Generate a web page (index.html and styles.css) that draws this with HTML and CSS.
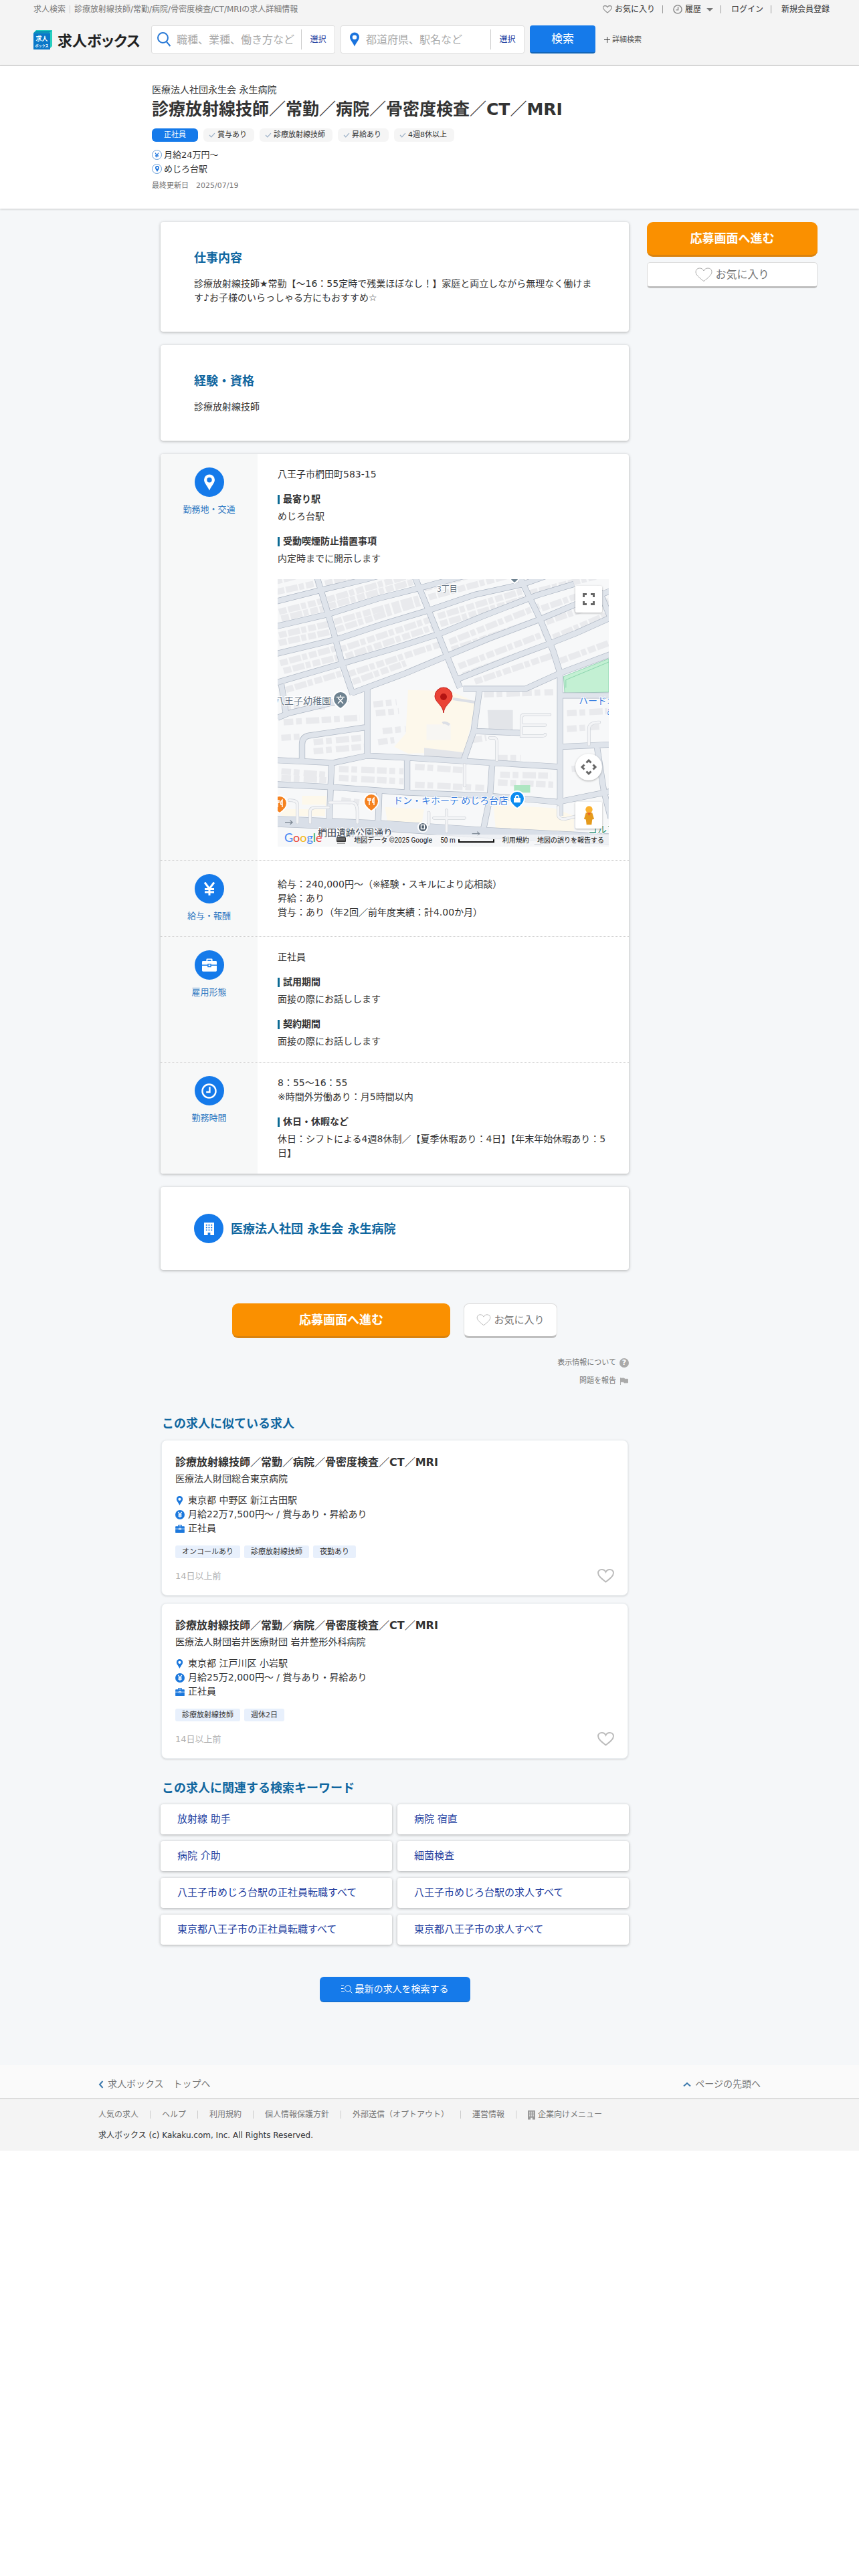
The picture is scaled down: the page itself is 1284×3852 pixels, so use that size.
FILE: index.html
```html
<!DOCTYPE html>
<html lang="ja">
<head>
<meta charset="utf-8">
<meta name="viewport" content="width=device-width, initial-scale=1">
<title>診療放射線技師/常勤/病院/骨密度検査/CT/MRIの求人詳細情報</title>
<link rel="stylesheet" href="styles.css">
</head>
<body>
<svg class="defs" aria-hidden="true">
  <symbol id="heart" viewBox="0 0 26 22"><path d="M13 20.5C6 15 1 11 1 6.5 1 3 3.700 1 6.800 1 9.500 1 11.800 2.500 13 5 14.200 2.500 16.500 1 19.200 1 22.300 1 25 3 25 6.500 25 11 20 15 13 20.500Z" fill="none" stroke="currentColor"/></symbol>
  <symbol id="clock" viewBox="0 0 24 24"><circle cx="12" cy="12" r="10.500" fill="none" stroke="currentColor" stroke-width="2.500"/><path d="M13 5.500v8H7.500" fill="none" stroke="currentColor" stroke-width="2.500"/></symbol>
  <symbol id="pin" viewBox="0 0 16 24"><path fill-rule="evenodd" d="M8 0a8 8 0 0 1 8 8c0 5-5.500 9.500-8 16C5.500 17.500 0 13 0 8a8 8 0 0 1 8-8Zm0 4.500a3.700 3.700 0 1 0 0 7.400 3.700 3.700 0 0 0 0-7.400Z" fill="currentColor"/></symbol>
  <symbol id="yen" viewBox="0 0 20 20"><path d="M3 0.500 10 10 17 0.500M10 9v11M3 10.500h14M3 15h14" fill="none" stroke="currentColor" stroke-width="3"/></symbol>
  <symbol id="bag" viewBox="0 0 24 21"><path fill-rule="evenodd" d="M7 4V1.500Q7 0 8.500 0h7Q17 0 17 1.500V4h5.500Q24 4 24 5.500V10h-9V8.500H9V10H0V5.500Q0 4 1.500 4ZM9 4h6V2H9ZM0 11.500h9V14h6v-2.500h9v8q0 1.500-1.500 1.500h-21Q0 21 0 19.500ZM10.500 10h3v2.500h-3Z" fill="currentColor"/></symbol>
  <symbol id="building" viewBox="0 0 16 20"><path fill-rule="evenodd" d="M0 0h16v20h-6v-4H6v4H0ZM3 3v2h2V3Zm4 0v2h2V3Zm4 0v2h2V3ZM3 7v2h2V7Zm4 0v2h2V7Zm4 0v2h2V7ZM3 11v2h2v-2Zm4 0v2h2v-2Zm4 0v2h2v-2Z" fill="currentColor"/></symbol>
  <symbol id="check" viewBox="0 0 12 10"><path d="M1 5l3.500 3.500L11 1.500" fill="none" stroke="currentColor" stroke-width="1.500"/></symbol>
  <symbol id="yen-disc" viewBox="0 0 14 14"><circle cx="7" cy="7" r="7" fill="currentColor"/><path d="M4.300 3 7 6.600 9.700 3M7 6v5.300M4.300 7.100h5.400M4.300 9.100h5.400" fill="none" stroke="#fff" stroke-width="1.300"/></symbol>
</svg>

<header class="site-header">
  <div class="top-row">
    <nav class="crumbs" aria-label="パンくず"><a href="#">求人検索</a><i class="bar"></i><span>診療放射線技師/常勤/病院/骨密度検査/CT/MRIの求人詳細情報</span></nav>
    <nav class="user-nav" aria-label="ユーザー">
      <a href="#"><svg class="i-nav heart-bold"><use href="#heart"/></svg>お気に入り</a><i class="bar"></i>
      <a href="#"><svg class="i-nav"><use href="#clock"/></svg>履歴<b class="caret"></b></a><i class="bar"></i>
      <a href="#">ログイン</a><i class="bar"></i>
      <a href="#">新規会員登録</a>
    </nav>
  </div>
  <div class="search-row">
    <a class="logo" href="#" aria-label="求人ボックス">
      <svg class="logo-mark" viewBox="0 0 28 29"><path d="M0 4.500 4 0h24v24l-5 5Z" fill="#27cfc0"/><path d="M0 4.500 4 1h23l-4 3.500Z" fill="#0b93b8"/><path d="M0 4.500h25V29H0Z" fill="#0b78c8"/><text x="12.500" y="16" text-anchor="middle" font-size="9">求人</text><text x="12.500" y="25" text-anchor="middle" font-size="5">ボックス</text></svg>
      <span class="logo-text">求人ボックス</span>
    </a>
    <form class="search" action="#">
      <div class="field">
        <svg class="i-search" viewBox="0 0 20 24"><circle cx="8.500" cy="9.500" r="7.500"/><path d="M14 15.500l5.500 6.500"/></svg>
        <input type="text" aria-label="キーワード" placeholder="職種、業種、働き方など">
        <button class="pick" type="button">選択</button>
      </div>
      <div class="field">
        <svg class="i-pin"><use href="#pin"/></svg>
        <input type="text" aria-label="勤務地" placeholder="都道府県、駅名など">
        <button class="pick" type="button">選択</button>
      </div>
      <button class="btn-search" type="submit">検索</button>
      <a class="detail" href="#"><svg class="i-plus" viewBox="0 0 9 9"><path d="M4.500 0v9M0 4.500h9"/></svg>詳細検索</a>
    </form>
  </div>
</header>

<section class="job-head">
  <p class="company">医療法人社団永生会 永生病院</p>
  <h1>診療放射線技師／常勤／病院／骨密度検査／CT／MRI</h1>
  <ul class="tags">
    <li class="main-tag">正社員</li>
    <li><svg class="i-check"><use href="#check"/></svg>賞与あり</li>
    <li><svg class="i-check"><use href="#check"/></svg>診療放射線技師</li>
    <li><svg class="i-check"><use href="#check"/></svg>昇給あり</li>
    <li><svg class="i-check"><use href="#check"/></svg>4週8休以上</li>
  </ul>
  <p class="fact"><span class="ring"><svg class="r-yen"><use href="#yen"/></svg></span>月給24万円～</p>
  <p class="fact"><span class="ring"><svg class="r-pin"><use href="#pin"/></svg></span>めじろ台駅</p>
  <p class="updated">最終更新日　2025/07/19</p>
</section>

<div class="body-wrap">
<main>
  <section class="card text-card"><h2>仕事内容</h2><p>診療放射線技師★常勤【～16：55定時で残業ほぼなし！】家庭と両立しながら無理なく働けます♪お子様のいらっしゃる方にもおすすめ☆</p></section>
  <section class="card text-card"><h2>経験・資格</h2><p>診療放射線技師</p></section>

  <section class="card rows">
    <div class="row">
      <div class="side-label"><span class="disc"><svg class="d-pin"><use href="#pin"/></svg></span>勤務地・交通</div>
      <div class="content">
        <p>八王子市椚田町583-15</p>
        <h3>最寄り駅</h3><p>めじろ台駅</p>
        <h3>受動喫煙防止措置事項</h3><p>内定時までに開示します</p>
        <div class="map">
          <svg class="map-art" viewBox="0 0 495 400" preserveAspectRatio="xMidYMid slice" role="img" aria-label="地図">
            <defs>
              <g id="streets">
                <path d="M30 150 240 95 430 48 600 0M30 262 265 205 480 135 660 88 760 60 900 20M30 385 300 318 500 250 700 188 900 118 1110 70 1300 0M30 515 320 428 560 355 750 292 940 212 1170 120 1330 70M365 560 600 470 780 392 960 315 1190 225 1340 160 1490 100M830 495 1100 385 1230 335 1340 290 1490 220M850 540 1120 540 1270 470 1490 385M215 40 285 280 325 430 370 565M640 40 700 190 770 370 835 535M1095 40 1180 220 1240 370 1270 470 1270 1110M1440 100 1490 225" />
                <path d="M433 540V840M150 855V790Q150 755 180 750L433 712M30 860 285 872 433 840 620 850 860 865 1270 890M30 968 265 980 600 1005 960 1020 1260 1048 1490 1000M920 545 895 730 850 865M900 730 1100 738M278 875 268 1140M606 860V1000M975 880 965 1030 935 1180M1270 800 1490 790M1430 800 1460 1000 1490 1120M1270 570H1490M44 670 90 650 350 585M60 520 80 650M485 1000 480 1140"/>
              </g>
            </defs>
            <rect width="495" height="400" fill="#f7f8f9"/>
            <g transform="scale(.3444 .3333) translate(-44 -48)" fill="none">
              <g stroke="#e9eaed" stroke-width="28">
                <path stroke-dasharray="34 7 52 6 22 9" d="M30 60 200 15M40 105 220 65M50 195 245 145M60 225 250 178M50 300 270 248M50 335 285 282M55 425 300 358M70 460 310 398M80 545 330 468M250 68 400 30M260 140 640 25M265 170 650 55M290 240 670 130M300 275 690 145M310 365 720 225M340 395 745 255M350 475 750 340M370 510 600 425M680 90 900 25M700 130 1090 20M740 215 1130 95M750 250 1150 125M790 330 1180 170M800 365 1210 220M830 440 1210 290M850 480 1230 335M900 508 1240 390M1140 110 1430 35M1190 180 1440 90M1210 240 1480 145M1240 310 1480 205M1270 415 1480 335"/>
                <path stroke-dasharray="42 12 25 18 58 10" d="M60 620 250 620M70 690 400 670M200 780 410 760M200 820 420 800M60 910 250 925M60 940 255 950M310 900 590 910M310 940 590 955M640 890 850 905M640 970 940 985M1000 960 1240 970M1010 925 1230 930M940 565 1240 555M1300 720 1440 710M1300 650 1480 640M1320 900 1430 890M460 610 560 600M470 650 570 640M480 780 550 770M500 730 600 720M60 760 140 755M320 1040 400 1050M890 770 950 760M1000 850 1100 850"/>
              </g>
              <path d="M610 545 790 550 905 600 855 825 610 830 550 800 600 740ZM150 1020H255V1080H60V1110H250V1060H150ZM510 1070 680 1080 670 1140 520 1135ZM980 1060 1240 1075 1330 1110 1330 1180 990 1165Z" fill="#fdf8eb"/>
              <path d="M690 700H795V770H690Z" fill="#f7f6f3"/>
              <path d="M680 805 850 825 845 870 680 850ZM955 635H1065V725H960Z" fill="#e3e5e9"/>
              <path d="M805 585 900 600" stroke="#dcdfe6" stroke-width="12"/>
              <path d="M760 695Q770 688 790 702" stroke="#dcdfe6" stroke-width="12"/>
              <path d="M1285 485 1481 405V555L1290 560Z" fill="#c3f0d3" stroke="#6fc79b" stroke-width="2"/>
              <path d="M1295 535V500L1481 420" stroke="#6fc79b" stroke-width="2"/>
              <path d="M1070 972H1140V1006H1070Z" fill="#aee6c2"/>
              <g stroke="#adb6c3" stroke-width="27"><use href="#streets"/></g>
              <path d="M30 1135 500 1155 935 1185 1500 1215" stroke="#adb6c3" stroke-width="50"/>
              <g stroke="#dfe4eb" stroke-width="23"><use href="#streets"/></g>
              <path d="M30 1135 500 1155 935 1185 1500 1215" stroke="#d9dfe8" stroke-width="46"/>
              <g stroke="#cfd3d9" stroke-width="14" stroke-linecap="round"><path id="alley" d="M1225 656H1115Q1102 656 1102 670V752H1190Q1205 752 1205 745M1102 703H1205M965 760H985Q995 762 995 780V860M1395 790V720Q1395 690 1440 690M130 1140V1060Q130 1040 95 1040M185 1140V1090Q185 1072 215 1072H265M270 1050H370Q390 1055 390 1090V1140M700 1150V1095M722 1120H855M777 1085V1180M855 975V880M1262 1070V1110Q1270 1130 1300 1122L1340 1112"/></g>
              <g stroke="#f3f4f6" stroke-width="10" stroke-linecap="round"><use href="#alley"/></g>
              <g stroke="#7d8894" stroke-width="4"><path d="M76 1139H106M98 1130 108 1139 98 1148M888 1190H918M910 1181 920 1190 910 1199M1188 1238H1158"/></g>
            </g>
            <g class="map-name">
              <text x="238" y="19" class="n-gray" font-size="12">3丁目</text>
              <text x="-4" y="187" class="n-gray" font-size="14">八王子幼稚園</text>
              <text x="173" y="336" class="n-blue" font-size="14">ドン・キホーテ めじろ台店</text>
              <text x="450" y="187" class="n-blue" font-size="14">ハードオ</text>
              <text x="492" y="203" class="n-blue" font-size="12">め</text>
              <text x="60" y="384" class="n-road" font-size="14">椚田遺跡公園通り</text>
              <text x="464" y="379" class="n-green" font-size="14">ゴルフ</text>
            </g>
            <g stroke="#fff" stroke-width="2">
              <path d="M94 194Q83 187 83 179a11 11 0 0 1 22 0Q105 187 94 194Z" fill="#6f8391"/>
              <path d="M140 347Q129 340 129 332a11 11 0 0 1 22 0Q151 340 140 347Z" fill="#f58220"/>
              <path d="M3 350Q-8 343-8 335a11 11 0 0 1 22 0Q14 343 3 350Z" fill="#f58220"/>
              <path d="M358 343Q347 336 347 328a11 11 0 0 1 22 0Q369 336 358 343Z" fill="#0b8cf0"/>
              <path d="M354 6Q345 0 345-8H363Q363 0 354 6Z" fill="#6f8391"/>
              <circle cx="217" cy="371" r="7" fill="#4e5d6c"/>
            </g>
            <g fill="none" stroke="#fff" stroke-width="1.500"><path d="M94 173v3M88 176.500h12M90.500 178 98 186M97.500 178 90 186"/><path d="M137 327v11M135 327v4h4v-4M144 338v-11q-3 2-2 7h2M0 330v11M-2 330v4h4v-4M7 341v-11q-3 2-2 7h2"/><path d="M355.500 327v-1a2.500 2.500 0 0 1 5 0v1"/><rect x="214.500" y="367.500" width="5" height="6"/></g>
            <path d="M353 327h10v7h-10Z" fill="#fff"/>
            <path d="M248 200C247 188 235 184 235 175a13 13 0 0 1 26 0C261 184 249 188 248 200Z" fill="#ea4335" stroke="#c5221f"/><circle cx="248" cy="176" r="5" fill="#b31412"/>
          </svg>
          <button class="map-btn map-full" type="button" aria-label="全画面表示"><svg viewBox="0 0 18 18"><path d="M1.500 6V1.500H6M12 1.500h4.500V6M16.500 12v4.500H12M6 16.500H1.500V12"/></svg></button>
          <button class="map-btn map-pan" type="button" aria-label="地図の移動"><svg viewBox="0 0 22 22"><path d="M7.500 4.500 11 1l3.500 3.500M17.500 7.500 21 11l-3.500 3.500M14.500 17.500 11 21l-3.500-3.500M4.500 14.500 1 11l3.500-3.500"/></svg></button>
          <button class="map-btn map-man" type="button" aria-label="ストリートビュー"><svg viewBox="0 0 18 30"><path d="M4 11h10l3 10-3 1-1 8H5L4 22l-3-1Z" fill="#e59a1c"/><circle cx="9" cy="6" r="5.500" fill="#fbb12e"/><path d="M6 11h6l-3 5Z" fill="#e8622c"/></svg></button>
          <div class="map-google" aria-label="Google"><span class="g1">G</span><span class="g2">o</span><span class="g3">o</span><span class="g1">g</span><span class="g4">l</span><span class="g2">e</span></div>
          <div class="map-bar"><svg class="i-key" viewBox="0 0 14 10"><rect width="14" height="7" rx="1" fill="#333"/><path d="M1.500 2h11M1.500 4h11" stroke="#fff" stroke-dasharray="1 1"/><path d="M1 9h12" stroke="#555"/></svg><span>地図データ ©2025 Google</span><span class="scale">50 m<i></i></span><a href="#">利用規約</a><a href="#">地図の誤りを報告する</a></div>
        </div>
      </div>
    </div>
    <div class="row">
      <div class="side-label"><span class="disc"><svg class="d-yen"><use href="#yen"/></svg></span>給与・報酬</div>
      <div class="content"><p>給与：240,000円～（※経験・スキルにより応相談）<br>昇給：あり<br>賞与：あり（年2回／前年度実績：計4.00か月）</p></div>
    </div>
    <div class="row">
      <div class="side-label"><span class="disc"><svg class="d-bag"><use href="#bag"/></svg></span>雇用形態</div>
      <div class="content"><p>正社員</p><h3>試用期間</h3><p>面接の際にお話しします</p><h3>契約期間</h3><p>面接の際にお話しします</p></div>
    </div>
    <div class="row">
      <div class="side-label"><span class="disc"><svg class="d-clock"><use href="#clock"/></svg></span>勤務時間</div>
      <div class="content"><p>8：55～16：55<br>※時間外労働あり：月5時間以内</p><h3>休日・休暇など</h3><p>休日：シフトによる4週8休制／【夏季休暇あり：4日】【年末年始休暇あり：5日】</p></div>
    </div>
  </section>

  <section class="card company-card"><span class="disc"><svg class="d-bldg"><use href="#building"/></svg></span><h2>医療法人社団 永生会 永生病院</h2></section>

  <div class="actions">
    <button class="apply" type="button">応募画面へ進む</button>
    <button class="fav" type="button"><svg class="i-fav"><use href="#heart"/></svg>お気に入り</button>
  </div>
  <ul class="notes">
    <li><a href="#">表示情報について<span class="q">?</span></a></li>
    <li><a href="#">問題を報告<svg class="i-flag" viewBox="0 0 14 12"><path d="M1 0v12M1 1h6l1 1.500h5v6H7L6 7H1Z" fill="#aaa" stroke="#aaa"/></svg></a></li>
  </ul>

  <h2 class="list-title">この求人に似ている求人</h2>
  <article class="similar">
    <h3><a href="#">診療放射線技師／常勤／病院／骨密度検査／CT／MRI</a></h3>
    <p class="sim-co">医療法人財団総合東京病院</p>
    <ul class="sim-facts">
      <li><svg class="s-pin"><use href="#pin"/></svg>東京都 中野区 新江古田駅</li>
      <li><svg class="s-yen"><use href="#yen-disc"/></svg>月給22万7,500円～ / 賞与あり・昇給あり</li>
      <li><svg class="s-bag"><use href="#bag"/></svg>正社員</li>
    </ul>
    <ul class="chips"><li>オンコールあり</li><li>診療放射線技師</li><li>夜勤あり</li></ul>
    <div class="sim-foot"><span>14日以上前</span><button class="sim-fav" type="button" aria-label="お気に入り"><svg><use href="#heart"/></svg></button></div>
  </article>
  <article class="similar">
    <h3><a href="#">診療放射線技師／常勤／病院／骨密度検査／CT／MRI</a></h3>
    <p class="sim-co">医療法人財団岩井医療財団 岩井整形外科病院</p>
    <ul class="sim-facts">
      <li><svg class="s-pin"><use href="#pin"/></svg>東京都 江戸川区 小岩駅</li>
      <li><svg class="s-yen"><use href="#yen-disc"/></svg>月給25万2,000円～ / 賞与あり・昇給あり</li>
      <li><svg class="s-bag"><use href="#bag"/></svg>正社員</li>
    </ul>
    <ul class="chips"><li>診療放射線技師</li><li>週休2日</li></ul>
    <div class="sim-foot"><span>14日以上前</span><button class="sim-fav" type="button" aria-label="お気に入り"><svg><use href="#heart"/></svg></button></div>
  </article>

  <h2 class="list-title keys-title">この求人に関連する検索キーワード</h2>
  <ul class="keys">
    <li><a href="#">放射線 助手</a></li><li><a href="#">病院 宿直</a></li>
    <li><a href="#">病院 介助</a></li><li><a href="#">細菌検査</a></li>
    <li><a href="#">八王子市めじろ台駅の正社員転職すべて</a></li><li><a href="#">八王子市めじろ台駅の求人すべて</a></li>
    <li><a href="#">東京都八王子市の正社員転職すべて</a></li><li><a href="#">東京都八王子市の求人すべて</a></li>
  </ul>
  <button class="latest" type="button"><svg class="i-list" viewBox="0 0 17 13"><circle cx="10" cy="5.500" r="4.500"/><path d="M13 9l3.500 3.500M0 1.500h4M0 5.500h3.500M0 9.500h5"/></svg>最新の求人を検索する</button>
</main>
<aside>
  <button class="apply" type="button">応募画面へ進む</button>
  <button class="fav" type="button"><svg class="i-fav"><use href="#heart"/></svg>お気に入り</button>
</aside>
</div>

<footer>
  <div class="foot-top">
    <a href="#"><svg class="i-left" viewBox="0 0 8 12"><path d="M6.500 1 2 6l4.500 5"/></svg>求人ボックス　トップへ</a>
    <a href="#"><svg class="i-up" viewBox="0 0 12 8"><path d="M1 6.500 6 2l5 4.500"/></svg>ページの先頭へ</a>
  </div>
  <div class="foot-main">
    <ul class="foot-links">
      <li><a href="#">人気の求人</a></li><li><a href="#">ヘルプ</a></li><li><a href="#">利用規約</a></li><li><a href="#">個人情報保護方針</a></li><li><a href="#">外部送信（オプトアウト）</a></li><li><a href="#">運営情報</a></li><li><a href="#"><svg class="i-bldg"><use href="#building"/></svg>企業向けメニュー</a></li>
    </ul>
    <p class="copy">求人ボックス (c) Kakaku.com, Inc. All Rights Reserved.</p>
  </div>
</footer>
</body>
</html>
```
FILE: styles.css
```css
* { box-sizing: border-box; }
body, h1, h2, h3, p, ul { margin: 0; padding: 0; }
body { background: #fff; color: #333; font: 14px/21px "DejaVu Sans", "Noto Sans CJK JP", sans-serif; }
ul { list-style: none; }
a { color: inherit; text-decoration: none; }
button, input { font: inherit; color: inherit; border: 0; margin: 0; padding: 0; }
button { cursor: pointer; }
svg { flex: none; overflow: visible; }
.defs { position: absolute; width: 0; height: 0; }

.site-header { background: #f4f4f4; border-bottom: 1px solid #bbb; height: 98px; padding: 4px 44px 0 50px; }
.top-row { display: flex; justify-content: space-between; font-size: 12px; line-height: 20px; }
.crumbs, .user-nav { display: flex; align-items: center; }
.crumbs { color: #777; }
.crumbs .bar { margin: 0 6px; background: #ccc; }
.bar { width: 1px; height: 12px; background: #999; }
.user-nav a { display: flex; align-items: center; gap: 4px; margin-left: 15px; }
.user-nav .bar { margin-left: 11px; }
.i-nav { width: 14px; height: 14px; color: #888; }
.heart-bold { stroke-width: 2; }
.caret { border: 5px solid transparent; border-top-color: #777; border-bottom: 0; margin-left: 4px; }

.search-row { display: flex; align-items: center; margin-top: 14px; }
.logo { display: flex; align-items: center; gap: 8px; width: 176px; }
.logo-mark { width: 28px; height: 29px; fill: #fff; font-weight: 700; }
.logo-text { font: 700 22px/29px "Noto Sans CJK JP", sans-serif; font-feature-settings: "palt"; color: #222; white-space: nowrap; }
.search { display: flex; align-items: center; }
.field { display: flex; align-items: center; width: 275px; height: 42px; margin-right: 8px; background: #fff; border: 1px solid #ddd; border-radius: 3px; }
.field input { flex: 1; min-width: 0; height: 30px; background: transparent; font-size: 16px; outline: 0; }
.field input::placeholder { color: #aaa; opacity: 1; }
.i-search { width: 20px; height: 24px; margin: 0 9px 0 8px; fill: none; stroke: #2a7ad6; stroke-width: 2; }
.i-pin { width: 14px; height: 22px; margin: 0 10px 0 13px; color: #1a73dd; }
.pick { width: 50px; height: 30px; background: none; border-left: 1px solid #ccc; color: #23409f; font-size: 12px; }
.btn-search { width: 98px; height: 42px; background: #157aea; color: #fff; font-size: 17px; border-radius: 4px; border-bottom: 2px solid #1265b8; }
.detail { display: flex; align-items: center; gap: 3px; margin-left: 13px; font-size: 11px; color: #555; }
.i-plus { width: 9px; height: 9px; stroke: #333; }

.job-head { height: 214px; padding: 25px 44px 0 227px; background: #fff; box-shadow: 0 1px 3px rgba(0,0,0,.2); position: relative; }
.company { line-height: 22px; }
h1 { font-size: 25px; line-height: 38px; }
.tags { display: flex; gap: 8px; margin: 9px 0; }
.tags li { display: flex; align-items: center; gap: 3px; height: 20px; padding: 0 11px 0 8px; border-radius: 6px; background: #f5f5f5; font-size: 11px; line-height: 20px; }
.tags .main-tag { padding: 0 18px; background: #157aea; color: #fff; }
.i-check { width: 10px; height: 8px; color: #9aafc6; }
.fact { display: flex; align-items: center; gap: 3px; font-size: 13px; line-height: 21px; }
.ring { display: flex; align-items: center; justify-content: center; width: 15px; height: 15px; border: 1px solid #6b9fd8; border-radius: 50%; color: #1a73dd; }
.r-yen { width: 7px; height: 8px; }
.r-pin { width: 6px; height: 9px; }
.updated { margin-top: 4px; font-size: 11px; color: #777; }

.body-wrap { display: grid; grid-template-columns: minmax(0, 1fr) 255px; gap: 27px; align-items: start; padding: 20px 62px 94px 240px; background: #f5f7f9; }
.card { background: #fff; border-radius: 4px; box-shadow: 0 1px 4px rgba(0,0,0,.3); margin-bottom: 20px; }
.text-card { padding: 40px 50px; }
.card h2, .list-title { font-size: 18px; line-height: 27px; color: #0f669f; }
.text-card h2 { margin-bottom: 15px; }
.rows { overflow: hidden; }
.row { display: grid; grid-template-columns: 145px minmax(0, 1fr); border-bottom: 1px dotted #ccc; }
.row:last-child { border-bottom: 0; }
.side-label { display: flex; flex-direction: column; align-items: center; gap: 8px; padding: 20px 0; background: #f7f8f8; color: #2f78c2; font-size: 13px; }
.disc { display: flex; align-items: center; justify-content: center; width: 44px; height: 44px; border-radius: 50%; background: #157aea; color: #fff; }
.d-pin { width: 16px; height: 25px; }
.d-yen { width: 20px; height: 20px; }
.d-bag { width: 22px; height: 20px; }
.d-clock { width: 23px; height: 23px; }
.d-bldg { width: 15px; height: 19px; }
.content { align-self: center; padding: 20px 30px; }
.content h3 { display: flex; align-items: center; font-size: 14px; line-height: 21px; margin: 16px 0 5px; }
.content h3::before { content: ""; width: 3px; height: 14px; margin-right: 5px; background: #0c6a94; }

.map { position: relative; height: 400px; margin-top: 20px; overflow: hidden; }
.map-art { display: block; width: 100%; height: 100%; overflow: hidden; }
.map-name { font-family: "Noto Sans CJK JP", sans-serif; paint-order: stroke; stroke: #fff; stroke-width: 2px; }
.n-gray { fill: #6b7886; }
.n-blue { fill: #3b7fe0; }
.n-road { fill: #4b5563; font-weight: 500; }
.n-green { fill: #2f9075; }
.map-btn { position: absolute; right: 10px; display: flex; align-items: center; justify-content: center; width: 40px; height: 40px; background: #fff; border-radius: 2px; box-shadow: 0 1px 3px rgba(0,0,0,.3); }
.map-full { top: 10px; }
.map-full svg { width: 18px; height: 18px; fill: none; stroke: #666; stroke-width: 3; }
.map-pan { bottom: 99px; border-radius: 50%; }
.map-pan svg { width: 22px; height: 22px; fill: none; stroke: #666; stroke-width: 3; }
.map-man { bottom: 27px; }
.map-man svg { width: 17px; height: 30px; }
.map-google { position: absolute; left: 10px; bottom: 3px; font: 18px/22px Lato, sans-serif; }
.g1 { color: #4285f4; } .g2 { color: #ea4335; } .g3 { color: #f2b50f; } .g4 { color: #34a853; }
.map-bar { position: absolute; left: 88px; right: 0; bottom: 0; display: flex; align-items: center; justify-content: space-between; height: 18px; padding-right: 7px; background: linear-gradient(90deg, transparent 20px, rgba(245,246,248,.75) 20px); color: #111; font: 10px/18px Roboto, "Noto Sans CJK JP", sans-serif; white-space: nowrap; }
.i-key { width: 14px; height: 10px; }
.scale { display: flex; align-items: center; gap: 4px; }
.scale i { width: 54px; height: 5px; border: solid #111; border-width: 0 2px 2px; }

.company-card { display: flex; align-items: center; gap: 11px; padding: 40px 50px; }
.apply { background: #fa9000; color: #fff; font-size: 18px; font-weight: 700; height: 52px; border-radius: 9px; border-bottom: 3px solid #d98310; }
.fav { display: flex; align-items: center; justify-content: center; gap: 4px; background: #fff; color: #777; border: 1px solid #ddd; border-bottom: 3px solid #bfbfbf; border-radius: 8px; }
.i-fav { width: 22px; height: 18px; color: #aaa; }
.actions { display: flex; justify-content: center; gap: 20px; margin: 50px 0 27px; }
.actions .apply { width: 326px; }
.actions .fav { width: 140px; height: 52px; font-size: 15px; }
aside { display: grid; gap: 8px; }
aside .fav { height: 39px; font-size: 16px; border-radius: 5px; }
aside .i-fav { width: 26px; height: 22px; }
.notes { display: grid; gap: 7px; justify-items: end; font-size: 11px; line-height: 20px; color: #777; }
.notes a { display: flex; align-items: center; gap: 5px; }
.q { width: 14px; height: 14px; border-radius: 50%; background: #aaa; color: #fff; text-align: center; line-height: 14px; font-weight: 700; }
.i-flag { width: 14px; height: 11px; }

.list-title { margin: 40px 2px 11px; }
.similar { margin: 0 1px 11px; padding: 20px 20px 18px; border: 1px solid #e9edf0; border-radius: 8px; background: #fff; box-shadow: 0 1px 3px rgba(0,0,0,.15); }
.similar h3 { font-size: 16px; line-height: 25px; }
.sim-co { line-height: 24px; margin-bottom: 10px; }
.sim-facts li { display: grid; grid-template-columns: 19px 1fr; align-items: center; line-height: 21px; height: 21px; }
.sim-facts svg { color: #1c78dc; }
.s-pin { width: 11px; height: 14px; margin-left: 1px; }
.s-yen { width: 14px; height: 14px; }
.s-bag { width: 14px; height: 12px; }
.chips { display: flex; gap: 6px; margin: 15px 0 16px; }
.chips li { padding: 0 10px; height: 19px; border-radius: 3px; background: #e8f0fc; font-size: 11px; line-height: 19px; }
.sim-foot { display: flex; align-items: center; justify-content: space-between; height: 21px; font-size: 13px; color: #b0b0b0; }
.sim-fav { background: none; }
.sim-fav svg { display: block; width: 25px; height: 21px; stroke-width: 2; color: #bbb; }
.keys-title { margin-top: 30px; }
.keys { display: grid; grid-template-columns: 1fr 1fr; gap: 10px 8px; }
.keys a { display: block; height: 45px; padding: 0 25px; line-height: 45px; font-size: 15px; color: #23409f; background: #fff; border-radius: 4px; box-shadow: 0 1px 4px rgba(0,0,0,.3); }
.latest { display: flex; align-items: center; justify-content: center; gap: 4px; width: 225px; height: 38px; margin: 48px auto 0; border-radius: 6px; background: #157aea; color: #fff; border-bottom: 1px solid #1265b8; }
.i-list { width: 17px; height: 13px; fill: none; stroke: #fff; }

.foot-top { display: flex; justify-content: space-between; align-items: center; height: 51px; padding: 7px 147px 0; background: #fafafa; border-bottom: 1px solid #bbb; color: #777; }
.foot-top a { display: flex; align-items: center; gap: 6px; }
.foot-top svg { fill: none; stroke: #3b78ac; stroke-width: 2; }
.i-left { width: 8px; height: 14px; }
.i-up { width: 12px; height: 8px; }
.foot-main { padding: 13px 147px; background: #f4f4f4; font-size: 12px; line-height: 20px; }
.foot-links { display: flex; color: #777; }
.foot-links li { display: flex; align-items: center; }
.foot-links li + li::before { content: ""; width: 1px; height: 12px; margin: 0 17px; background: #ccc; }
.foot-links a { display: flex; align-items: center; gap: 4px; }
.i-bldg { width: 11px; height: 15px; color: #999; }
.copy { margin-top: 11px; }
```
